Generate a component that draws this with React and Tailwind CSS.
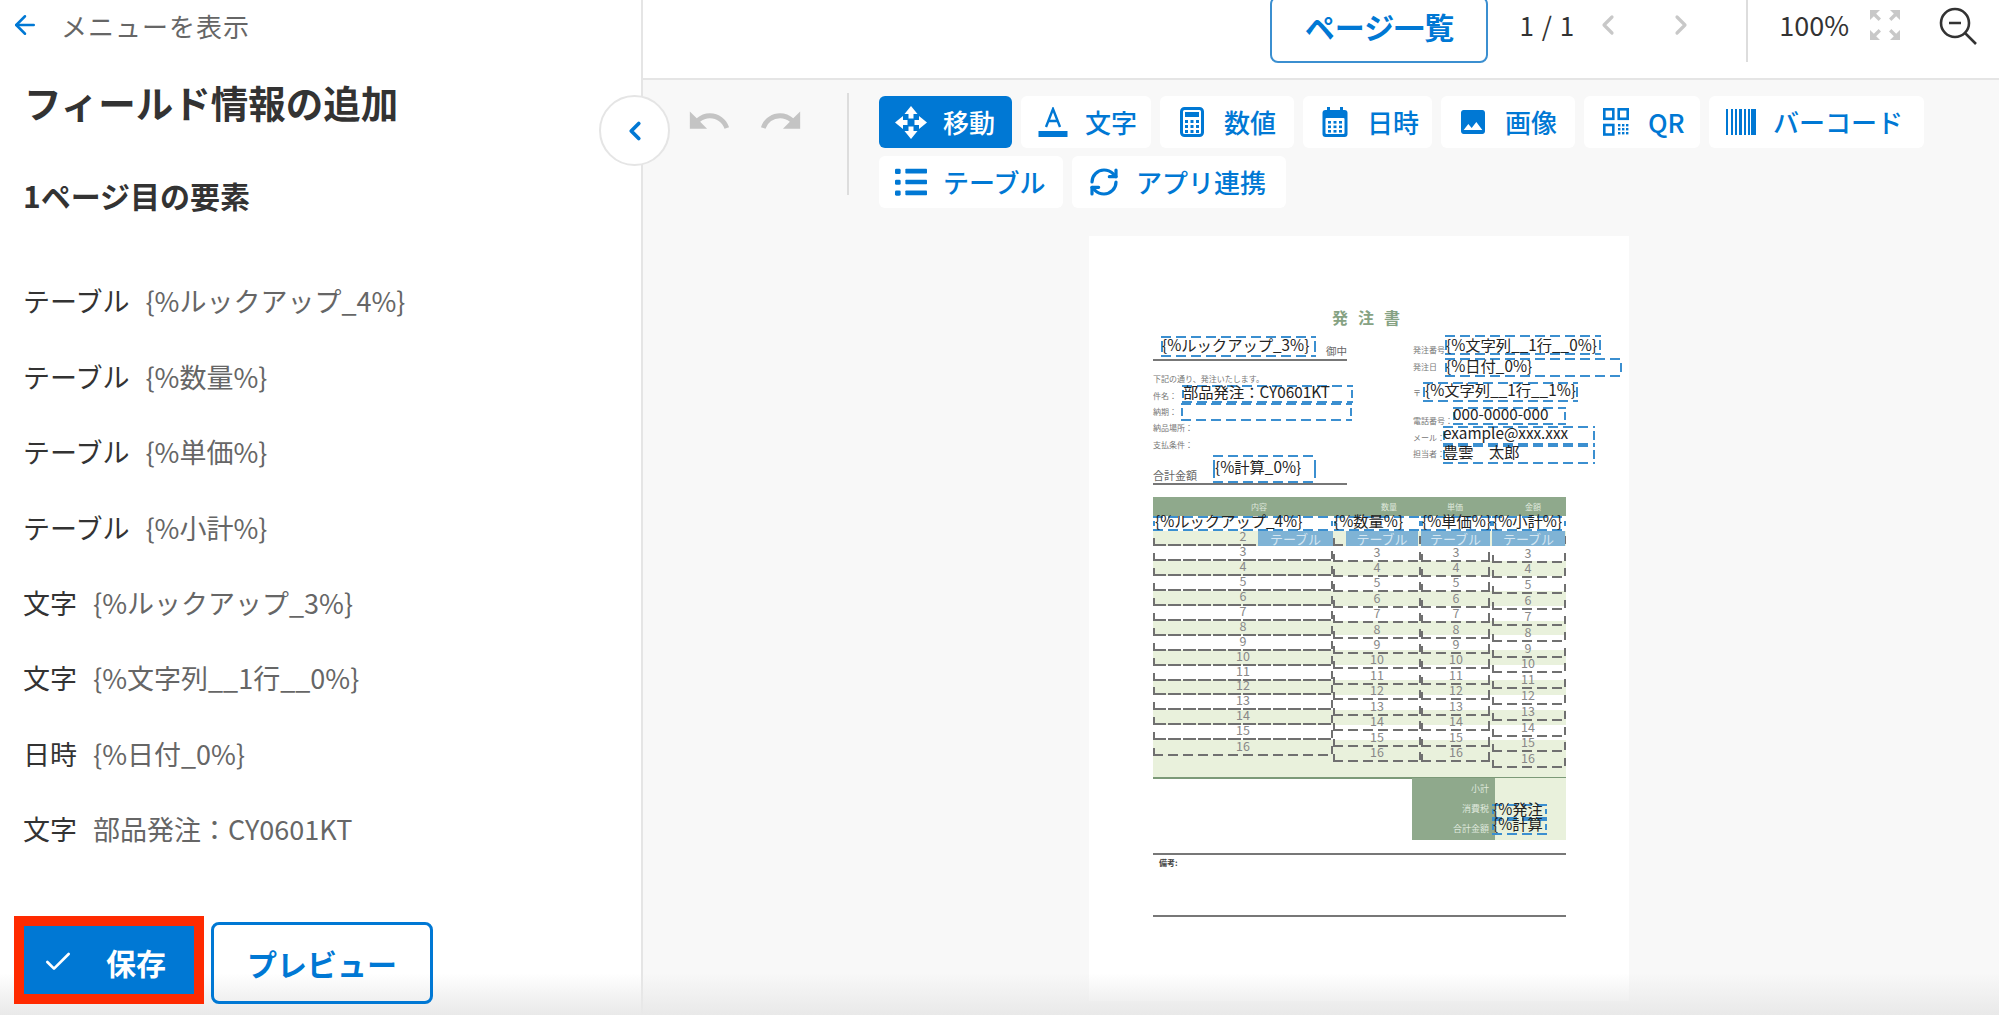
import { ArrowLeft, Check, ChevronLeft, ChevronRight, RefreshCw } from 'lucide-react';
import { MdImage, MdUndo, MdRedo, MdZoomOutMap } from 'react-icons/md';

// page origin inside the window, reference coordinates are window based
const PX = 1089;
const PY = 236;

const MoveIcon = () => (
  <svg width="32" height="33" viewBox="0 0 32 33" fill="#fff">
    <path d="M16 0l6.5 8h-4v4.5h-5V8h-4zM16 33l-6.5-8h4v-4.5h5V25h4zM0 16.5L8 10v4h4.5v5H8v4zM32 16.5L24 23v-4h-4.5v-5H24v-4z" />
  </svg>
);

const TextIcon = () => (
  <svg width="30" height="30" viewBox="0 0 30 30" fill="none">
    <path d="M8 20L15 2l7 18M10.5 14h9" stroke="#0078d4" strokeWidth="2.4" />
    <rect x="0.5" y="24" width="29" height="6" fill="#0078d4" />
  </svg>
);

const CalcIcon = () => (
  <svg width="24" height="30" viewBox="0 0 24 30" fill="none">
    <rect x="1.5" y="1.5" width="21" height="27" rx="3" stroke="#0078d4" strokeWidth="3" />
    <rect x="5" y="5" width="14" height="5" fill="#0078d4" />
    {[13, 18, 23].map((y) => [5, 10.5, 16].map((x) => <rect key={`${x}-${y}`} x={x} y={y} width="3" height="3" fill="#0078d4" />))}
  </svg>
);

const CalendarIcon = () => (
  <svg width="26" height="30" viewBox="0 0 26 30">
    <rect x="0.5" y="3" width="25" height="27" rx="3" fill="#0078d4" />
    <rect x="5" y="0" width="3" height="6" fill="#0078d4" />
    <rect x="18" y="0" width="3" height="6" fill="#0078d4" />
    <rect x="3.5" y="11" width="19" height="16" rx="1" fill="#fff" />
    {[14, 18.5, 23].map((y) => [6, 11.5, 17].map((x) => <rect key={`${x}-${y}`} x={x} y={y} width="3" height="2.6" fill="#0078d4" />))}
  </svg>
);

const QrIcon = () => (
  <svg width="26" height="28" viewBox="0 0 26 28" fill="none" stroke="#0078d4" strokeWidth="2.6">
    <rect x="1.3" y="1.3" width="9" height="9.5" />
    <rect x="15.7" y="1.3" width="9" height="9.5" />
    <rect x="1.3" y="17" width="9" height="9.5" />
    <g fill="#0078d4" stroke="none">
      {[16, 20, 24].map((y) => [15, 19, 23].map((x) => <rect key={`${x}-${y}`} x={x} y={y} width="2.4" height="2.4" />))}
    </g>
  </svg>
);

const BarcodeIcon = () => (
  <svg width="30" height="26" viewBox="0 0 30 26" fill="#0078d4">
    {[[0, 2], [5, 2], [9, 2], [13, 3], [18, 2], [22, 2], [25, 5]].map(([x, w]) => <rect key={x} x={x} y="0" width={w} height="26" />)}
  </svg>
);

const ListIcon = () => (
  <svg width="34" height="28" viewBox="0 0 34 28" fill="#0078d4">
    {[0, 11.5, 23].map((y) => (
      <g key={y}>
        <rect x="0" y={y} width="6" height="5.5" rx="1.4" />
        <rect x="11" y={y} width="23" height="5" rx="0.8" />
      </g>
    ))}
  </svg>
);

const tools = [
  { label: '移動', w: 'w-[133px]', active: true, icon: <MoveIcon /> },
  { label: '文字', w: 'w-[130px]', icon: <TextIcon /> },
  { label: '数値', w: 'w-[134px]', icon: <CalcIcon /> },
  { label: '日時', w: 'w-[129px]', icon: <CalendarIcon /> },
  { label: '画像', w: 'w-[134px]', icon: <MdImage size={36} color="#0078d4" /> },
  { label: 'QR', w: 'w-[116px]', icon: <QrIcon /> },
  { label: 'バーコード', w: 'w-[215px]', icon: <BarcodeIcon /> },
  { label: 'テーブル', w: 'w-[184px]', icon: <ListIcon /> },
  { label: 'アプリ連携', w: 'w-[214px]', icon: <RefreshCw size={32} color="#0078d4" strokeWidth={2.4} /> },
];

const elements = [
  ['テーブル', '{%ルックアップ_4%}'],
  ['テーブル', '{%数量%}'],
  ['テーブル', '{%単価%}'],
  ['テーブル', '{%小計%}'],
  ['文字', '{%ルックアップ_3%}'],
  ['文字', '{%文字列__1行__0%}'],
  ['日時', '{%日付_0%}'],
  ['文字', '部品発注：CY0601KT'],
];

// [x1, y1, x2, y2] blue dashed fields on the document
const blueBoxes = [
  [1161, 336, 1316, 357],
  [1182, 385, 1353, 403],
  [1181, 403, 1352, 421],
  [1213, 455, 1316, 483],
  [1445, 335, 1601, 355],
  [1445, 358, 1622, 377],
  [1423, 382, 1578, 402],
  [1453, 407, 1566, 425],
  [1443, 426, 1595, 445],
  [1443, 445, 1595, 464],
  [1153, 516, 1333, 531],
  [1334, 516, 1421, 531],
  [1421, 516, 1492, 531],
  [1492, 516, 1566, 531],
  [1492, 804, 1547, 819],
  [1492, 819, 1547, 835],
];

// [x, centerY, text]
const fieldTexts = [
  [1162, 346, '{%ルックアップ_3%}'],
  [1183, 393, '部品発注：CY0601KT'],
  [1215, 468, '{%計算_0%}'],
  [1446, 346, '{%文字列__1行__0%}'],
  [1446, 367, '{%日付_0%}'],
  [1425, 391, '{%文字列__1行__1%}'],
  [1453, 415, '000-0000-000'],
  [1443, 434, 'example@xxx.xxx'],
  [1443, 453, '豊雲　太郎'],
  [1155, 522, '{%ルックアップ_4%}'],
  [1334, 522, '{%数量%}'],
  [1422, 522, '{%単価%}'],
  [1493, 522, '{%小計%}'],
  [1493, 810, '{%発注'],
  [1493, 825, '{%計算'],
];

// [x, centerY, text]
const smallLabels = [
  [1153, 379, '下記の通り、発注いたします。'],
  [1153, 396, '件名：'],
  [1153, 412, '納期：'],
  [1153, 428, '納品場所：'],
  [1153, 445, '支払条件：'],
  [1413, 350, '発注番号'],
  [1413, 367, '発注日'],
  [1413, 393, '〒'],
  [1413, 421, '電話番号：'],
  [1413, 438, 'メール：'],
  [1413, 454, '担当者：'],
];

const headers = [[1259, '内容'], [1389, '数量'], [1455, '単価'], [1533, '金額']];
const chips = [[1258, 1333], [1346, 1418], [1421, 1490], [1492, 1565]];
const rowNumbers = Array.from({ length: 15 }, (_, i) => i + 2);

// dashed gray table cells, one list of bottom edges per column
const cellColumns = [
  { x1: 1153, x2: 1333, nx: 1243, bottoms: [546, 561, 576, 591, 606, 621, 636, 651, 666, 681, 695, 710, 725, 740, 756] },
  { x1: 1333, x2: 1421, nx: 1377, bottoms: [546, 562, 577, 592, 608, 623, 639, 654, 669, 685, 700, 716, 731, 747, 762] },
  { x1: 1421, x2: 1490, nx: 1456, bottoms: [546, 562, 577, 592, 608, 623, 639, 654, 669, 685, 700, 716, 731, 747, 762] },
  { x1: 1492, x2: 1566, nx: 1528, bottoms: [546, 563, 578, 594, 610, 626, 642, 658, 673, 689, 705, 721, 737, 752, 768] },
];

function Box({ box }) {
  const [x1, y1, x2, y2] = box;
  return (
    <div className="absolute" style={{ left: x1 - PX, top: y1 - PY, width: x2 - x1, height: y2 - y1 }}>
      <div className="absolute inset-x-0 top-0 h-[2px] bg-[repeating-linear-gradient(90deg,#3b8fd0_0,#3b8fd0_10px,transparent_10px,transparent_15px)]" />
      <div className="absolute inset-x-0 bottom-0 h-[2px] bg-[repeating-linear-gradient(90deg,#3b8fd0_0,#3b8fd0_10px,transparent_10px,transparent_15px)]" />
      <div className="absolute inset-y-[5px] left-0 w-[2px] bg-[#3b8fd0]" />
      <div className="absolute inset-y-[5px] right-0 w-[2px] bg-[#3b8fd0]" />
    </div>
  );
}

function Cell({ col, bottom, index }) {
  const first = col.x1 === 1153;
  const last = index === col.bottoms.length - 1;
  return (
    <div className="absolute" style={{ left: col.x1 - PX, top: bottom - 15 - PY, width: col.x2 - col.x1, height: 15 }}>
      <div
        className={
          first && !last
            ? 'absolute inset-x-0 bottom-0 h-[2px] bg-[repeating-linear-gradient(90deg,#707070_0,#707070_13px,transparent_13px,transparent_15px)]'
            : 'absolute inset-x-0 bottom-0 h-[2px] bg-[repeating-linear-gradient(90deg,#707070_0,#707070_10px,transparent_10px,transparent_15px)]'
        }
      />
      <div className="absolute bottom-0 left-0 h-[8px] w-[2px] bg-[#707070]" />
      <div className="absolute right-0 top-[5px] h-[8px] w-[2px] bg-[#707070]" />
    </div>
  );
}

function DocumentPage() {
  return (
    <div className="relative h-[765px] w-[540px] shrink-0 bg-white">
      <div className="absolute left-[243px] top-[70px] text-[16px] font-bold leading-[22px] tracking-[10px] text-[#86a283]">発注書</div>

      <div className="absolute left-[64px] top-[123px] h-[2px] w-[194px] bg-[#777]" />
      <div className="absolute left-[64px] top-[247px] h-[2px] w-[194px] bg-[#777]" />
      <div className="absolute left-[237px] top-[109px] text-[10.5px] leading-[12px] text-[#666]">御中</div>
      <div className="absolute left-[64px] top-[233px] text-[11px] leading-[12px] text-[#666]">合計金額</div>

      {smallLabels.map(([x, y, text]) => (
        <div key={text} className="absolute whitespace-nowrap text-[8px] leading-[10px] text-[#777]" style={{ left: x - PX, top: y - PY - 5 }}>
          {text}
        </div>
      ))}

      {/* table */}
      <div className="absolute left-[64px] top-[261px] w-[413px]">
        <div className="h-[19px] bg-[#8fa98c]" />
        <div className="h-[15px] bg-white" />
        {rowNumbers.map((n) => (
          <div key={n} className={n % 2 === 0 ? 'h-[14.93px] bg-[#e9f1dc]' : 'h-[14.93px] bg-white'} />
        ))}
        <div className="h-[24px] border-b-2 border-[#7c9a78] bg-[#e9f1dc]" />
      </div>

      {headers.map(([x, text]) => (
        <div key={text} className="absolute -translate-x-1/2 text-[8px] leading-[10px] text-[#dfe8dc]" style={{ left: x - PX, top: 261 + 5 }}>
          {text}
        </div>
      ))}

      {cellColumns.map((col) =>
        col.bottoms.map((bottom, i) => (
          <div key={`${col.x1}-${i}`}>
            <Cell col={col} bottom={bottom} index={i} />
            {(i > 0 || col.x1 === 1153) && (
              <div
                className="absolute -translate-x-1/2 text-[12.5px] leading-[12px] text-[#888]"
                style={{ left: col.nx - PX, top: bottom - 16 - PY }}
              >
                {i + 2}
              </div>
            )}
          </div>
        ))
      )}

      {chips.map(([x1, x2]) => (
        <div
          key={x1}
          className="absolute flex h-[15px] items-center justify-center bg-[#7fb3d5] text-[13px] leading-[15px] text-[#d5e6f1]"
          style={{ left: x1 - PX, top: 531 - PY, width: x2 - x1 }}
        >
          テーブル
        </div>
      ))}

      {/* totals */}
      <div className="absolute left-[323px] top-[542px] flex h-[62px] w-[154px]">
        <div className="flex w-[83px] flex-col items-end justify-between bg-[#8fa98c] py-[6px] pr-[6px] text-[9px] leading-[10px] text-[#dfe8dc]">
          <span>小計</span>
          <span>消費税</span>
          <span>合計金額</span>
        </div>
        <div className="w-[71px] bg-[#e9f1dc]" />
      </div>

      <div className="absolute left-[64px] top-[617px] h-[2px] w-[413px] bg-[#777]" />
      <div className="absolute left-[70px] top-[622px] text-[8px] font-bold leading-[10px] text-[#444]">備考:</div>
      <div className="absolute left-[64px] top-[679px] h-[2px] w-[413px] bg-[#777]" />

      {blueBoxes.map((box) => <Box key={box.join('-')} box={box} />)}

      {fieldTexts.map(([x, y, text]) => (
        <div key={text} className="absolute whitespace-nowrap text-[15.3px] leading-[14px] text-[#222]" style={{ left: x - PX, top: y - PY - 9 }}>
          {text}
        </div>
      ))}
    </div>
  );
}

export default function App() {
  return (
    <div className="relative flex h-[1015px] w-[1999px] overflow-hidden bg-white font-['Noto_Sans_CJK_JP','Noto_Sans',sans-serif] text-[#333]">
      {/* left panel */}
      <aside className="flex w-[643px] shrink-0 flex-col border-r-2 border-[#e5e5e5]">
        <div className="flex h-[50px] items-center gap-[21px] pl-[10px]">
          <ArrowLeft size={30} color="#0078d4" strokeWidth={2} />
          <span className="text-[26px] tracking-[1px] text-[#666]">メニューを表示</span>
        </div>
        <h1 className="mt-[28px] h-[48px] pl-[24px] text-[37.5px] font-bold leading-[48px] text-[#333]">フィールド情報の追加</h1>
        <h2 className="mt-[49px] h-[40px] pl-[23px] text-[30px] font-bold leading-[40px] text-[#333]">1ページ目の要素</h2>
        <ul className="mt-[49px]">
          {elements.map(([type, value], i) => (
            <li key={i} className="flex h-[75.4px] items-center gap-[16px] pl-[23px] text-[27px]">
              <span className="text-[#333]">{type}</span>
              <span className="text-[#666]">{value}</span>
            </li>
          ))}
        </ul>
        <div className="relative z-10 mt-auto flex items-end gap-[7px] pb-[11px] pl-[14px]">
          <button className="flex h-[88px] w-[190px] items-center border-[10px] border-[#ff2a00] bg-[#0078d4] pl-[18px] pt-[4px] text-[30px] font-bold text-white">
            <Check size={32} strokeWidth={2} />
            <span className="ml-[32px]">保存</span>
          </button>
          <button className="h-[82px] w-[222px] rounded-[8px] border-[3px] border-[#0078d4] bg-transparent text-[30px] font-bold text-[#0078d4]">プレビュー</button>
        </div>
      </aside>

      {/* collapse toggle */}
      <button className="absolute left-[599px] top-[95px] z-10 flex h-[71px] w-[71px] items-center justify-center rounded-full border-2 border-[#e5e5e5] bg-white">
        <ChevronLeft size={30} color="#0078d4" strokeWidth={3} />
      </button>

      <main className="flex min-w-0 flex-1 flex-col">
        <header className="flex h-[80px] shrink-0 items-start justify-end border-b-2 border-[#e5e5e5] bg-white pr-[22px]">
          <button className="-mt-[4px] h-[67px] w-[218px] rounded-[8px] border-2 border-[#3b8fd0] pb-[6px] text-[30px] font-bold text-[#0078d4]">ページ一覧</button>
          <span className="ml-[31px] mt-[7px] text-[26px] leading-[36px] tracking-[1px]">1 / 1</span>
          <ChevronLeft className="ml-[17px] mt-[9px]" size={32} color="#c8c8c8" strokeWidth={2.4} />
          <ChevronRight className="ml-[41px] mt-[9px]" size={32} color="#c8c8c8" strokeWidth={2.4} />
          <div className="ml-[49px] h-[62px] w-[2px] bg-[#ddd]" />
          <span className="ml-[31px] mt-[7px] text-[27px] leading-[36px]">100%</span>
          <MdZoomOutMap className="ml-[16px] mt-[5px]" size={40} color="#c8c8c8" />
          <svg className="ml-[34px] mt-[7px]" width="38" height="38" viewBox="0 0 38 38" fill="none" stroke="#333" strokeWidth="2.6">
            <circle cx="16" cy="16" r="14" />
            <path d="M10 16h12M26 26l11 11" />
          </svg>
        </header>
        <div className="flex min-h-0 flex-1 flex-col bg-[#f8f8f8]">
          <div className="flex pt-[13px]">
            <div className="flex items-start gap-[26px] pl-[43px] pt-[5px]">
              <MdUndo size={46} color="#c4c4c4" />
              <MdRedo size={46} color="#c4c4c4" />
            </div>
            <div className="ml-[43px] h-[102px] w-[2px] bg-[#ddd]" />
            <div className="ml-[30px] flex w-[1060px] flex-wrap content-start gap-x-[9px] gap-y-[8px] pt-[3px]">
              {tools.map((t) => (
                <button
                  key={t.label}
                  className={`flex h-[52px] items-center rounded-[6px] pl-[16px] text-[26px] font-medium ${t.w} ${t.active ? 'bg-[#0078d4] text-white' : 'bg-white text-[#0078d4]'}`}
                >
                  <span className="flex w-[32px] shrink-0 items-center justify-center">{t.icon}</span>
                  <span className="ml-[16px] whitespace-nowrap leading-none">{t.label}</span>
                </button>
              ))}
            </div>
          </div>
          <div className="ml-[446px] mt-[28px]">
            <DocumentPage />
          </div>
        </div>
      </main>

      {/* fade at the bottom edge of the window */}
      <div className="pointer-events-none absolute inset-x-0 bottom-0 z-[5] h-[42px] bg-gradient-to-b from-transparent to-[#e9e9e9]" />
    </div>
  );
}
